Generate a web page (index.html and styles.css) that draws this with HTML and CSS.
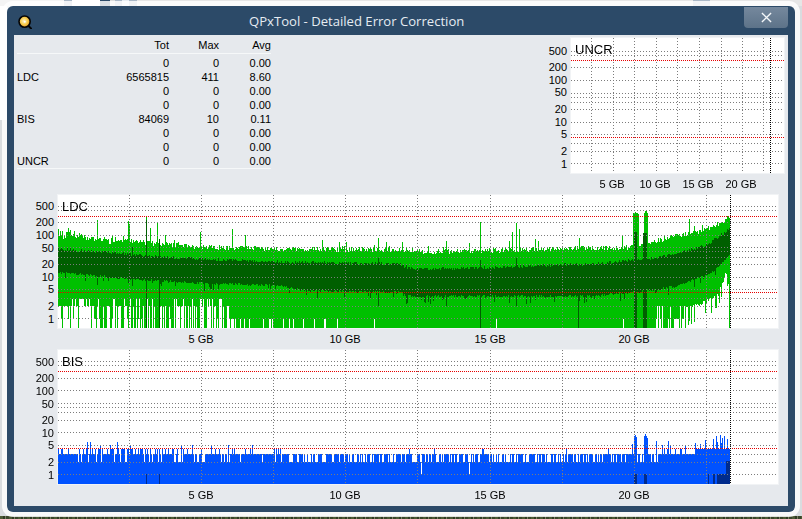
FILE: index.html
```html
<!DOCTYPE html>
<html lang="en">
<head>
<meta charset="utf-8">
<title>QPxTool - Detailed Error Correction</title>
<link rel="stylesheet" href="styles.css">
</head>
<body>
<main class="window">
  <header class="titlebar">
    <svg class="app-icon" viewBox="0 0 14 14" aria-hidden="true">
      <defs>
        <radialGradient id="disc" cx="45%" cy="45%" r="60%">
          <stop offset="0" stop-color="#fff6c8"/>
          <stop offset="0.55" stop-color="#f6c948"/>
          <stop offset="1" stop-color="#e08a1c"/>
        </radialGradient>
      </defs>
      <path d="M10 10.5 L13 13.4" stroke="#050505" stroke-width="2" stroke-linecap="round"/>
      <circle cx="6.6" cy="6.6" r="5.6" fill="url(#disc)" stroke="#050505" stroke-width="1.6"/>
      <circle cx="6.8" cy="6.8" r="1" fill="#fff"/>
    </svg>
    <h1 class="title">QPxTool - Detailed Error Correction</h1>
    <button class="close" type="button" aria-label="Close">
      <svg viewBox="0 0 12 12" aria-hidden="true"><path d="M1 1 L11 11 M11 1 L1 11"/></svg>
    </button>
  </header>
  <div class="panel">
    <div class="top-row">
      <table class="stats">
        <thead>
          <tr><th></th><th>Tot</th><th>Max</th><th>Avg</th></tr>
        </thead>
        <tbody>
          <tr><td></td><td>0</td><td>0</td><td>0.00</td></tr>
          <tr><td>LDC</td><td>6565815</td><td>411</td><td>8.60</td></tr>
          <tr><td></td><td>0</td><td>0</td><td>0.00</td></tr>
          <tr><td></td><td>0</td><td>0</td><td>0.00</td></tr>
          <tr><td>BIS</td><td>84069</td><td>10</td><td>0.11</td></tr>
          <tr><td></td><td>0</td><td>0</td><td>0.00</td></tr>
          <tr><td></td><td>0</td><td>0</td><td>0.00</td></tr>
          <tr><td>UNCR</td><td>0</td><td>0</td><td>0.00</td></tr>
        </tbody>
      </table>

      <section class="chart chart-uncr">
        <div class="y-axis">
          <span style="top:13px">500</span><span style="top:29px">200</span><span style="top:42px">100</span><span style="top:54px">50</span><span style="top:71px">20</span><span style="top:84px">10</span><span style="top:96px">5</span><span style="top:113px">2</span><span style="top:126px">1</span>
        </div>
        <div class="plot">
          <canvas id="uncr" width="213" height="135"></canvas>
          <span class="plot-name">UNCR</span>
        </div>
        <div class="x-axis">
          <span style="left:41px">5 GB</span><span style="left:84px">10 GB</span><span style="left:127px">15 GB</span><span style="left:170px">20 GB</span>
        </div>
      </section>
    </div>

    <section class="chart chart-wide">
      <div class="y-axis">
        <span style="top:11px">500</span><span style="top:27px">200</span><span style="top:40px">100</span><span style="top:53px">50</span><span style="top:69px">20</span><span style="top:82px">10</span><span style="top:94px">5</span><span style="top:111px">2</span><span style="top:124px">1</span>
      </div>
      <div class="plot">
        <canvas id="ldc" width="720" height="133"></canvas>
        <span class="plot-name">LDC</span>
      </div>
      <div class="x-axis">
        <span style="left:143px">5 GB</span><span style="left:287px">10 GB</span><span style="left:432px">15 GB</span><span style="left:576px">20 GB</span>
      </div>
    </section>

    <section class="chart chart-wide chart-bis">
      <div class="y-axis">
        <span style="top:12px">500</span><span style="top:28px">200</span><span style="top:41px">100</span><span style="top:54px">50</span><span style="top:70px">20</span><span style="top:83px">10</span><span style="top:95px">5</span><span style="top:112px">2</span><span style="top:125px">1</span>
      </div>
      <div class="plot">
        <canvas id="bis" width="720" height="134"></canvas>
        <span class="plot-name">BIS</span>
      </div>
      <div class="x-axis">
        <span style="left:143px">5 GB</span><span style="left:287px">10 GB</span><span style="left:432px">15 GB</span><span style="left:576px">20 GB</span>
      </div>
    </section>
  </div>
</main>
<script src="script.js"></script>
</body>
</html>
```

FILE: styles.css
```css
* { box-sizing: border-box; }

html, body { margin: 0; height: 100%; }

body {
  width: 802px;
  height: 519px;
  overflow: hidden;
  padding: 6px 0 0 7px;
  font-family: "Liberation Sans", Arial, sans-serif;
  background-color: #d9dcdf;
  background-image:
    linear-gradient(90deg, #f4f4f4 0 64px, #a9b7c6 64px 72px, #fff 72px 100px, #2c4a68 100px 110px, #dcdcdc 110px 115px, #a9b7c6 115px 122px, #e8edf2 122px 129px, #a9b7c6 129px 137px, #e6e6e6 137px 693px, #a9b7c6 693px 710px, #e6e6e6 710px),
    linear-gradient(#fff, #fff),
    repeating-linear-gradient(90deg, #4c5a34 0 3px, #2f3a24 3px 5px, #7a8060 5px 6px, #39452a 6px 9px);
  background-size: 100% 6px, 7px 120px, 100% 3px;
  background-position: 0 0, 0 0, 0 bottom;
  background-repeat: no-repeat;
}

.window {
  width: 788px;
  height: 506px;
  display: flex;
  flex-direction: column;
  background: #2c4a68;
  border-radius: 6px;
  box-shadow: 0 0 0 5px rgba(255, 255, 255, 0.82);
}

.titlebar {
  flex: 0 0 29px;
  display: flex;
  align-items: flex-start;
  padding: 1px 7px 0 11px;
}

.app-icon {
  flex: none;
  width: 14px;
  height: 14px;
  margin-top: 8px;
}

.title {
  margin: 5px 0 0 217px;
  flex: 1;
  font: 400 13.1px/18px "Open Sans", sans-serif;
  color: #e6ecf2;
  white-space: nowrap;
}

.close {
  flex: none;
  width: 44px;
  height: 21px;
  padding: 0;
  border: 0;
  border-radius: 0 0 4px 4px;
  background: linear-gradient(#75889d, #5d7389);
  display: flex;
  align-items: center;
  justify-content: center;
}

.close svg { width: 11px; height: 11px; }
.close path { stroke: #f4f7fa; stroke-width: 1.5; fill: none; }

.panel {
  flex: 1;
  margin: 0 7px 7px;
  padding-top: 3px;
  background: #e6e9ed;
}

.top-row {
  display: flex;
  justify-content: space-between;
  align-items: flex-start;
}

.stats {
  margin-left: 3px;
  width: 254px;
  table-layout: fixed;
  border-collapse: collapse;
  font-size: 11px;
  color: #000;
}

.stats th, .stats td {
  padding: 0;
  height: 14px;
  line-height: 14px;
  font-weight: 400;
  text-align: right;
}

.stats th:nth-child(1) { width: 102px; }
.stats th:nth-child(2) { width: 50px; }
.stats th:nth-child(3) { width: 50px; }
.stats th:nth-child(4) { width: 52px; }

.stats td:first-child { text-align: left; }

.stats thead tr { height: 15px; border-bottom: 1px solid #f6f8f9; }
.stats thead th { vertical-align: top; }

.stats tbody tr:first-child td { height: 17px; vertical-align: bottom; }
.stats tbody tr:last-child { border-bottom: 1px solid #f6f8f9; }

.chart {
  display: grid;
  grid-template-columns: 44px auto;
  grid-template-rows: auto 22px;
  font-size: 11px;
  color: #000;
}

.chart-uncr { margin-right: 4px; }
.chart-wide { margin-right: 10px; }

.y-axis {
  position: relative;
}

.y-axis span {
  position: absolute;
  right: 4px;
  line-height: 12px;
  transform: translateY(-50%);
}

.plot {
  position: relative;
  line-height: 0;
  background: #fff;
  box-shadow: 0 0 0 1px #f1f3f5;
}

.plot-name {
  position: absolute;
  left: 4px;
  top: 4px;
  font-size: 13px;
  line-height: 16px;
  color: #000;
}

.x-axis {
  grid-column: 2;
  position: relative;
}

.x-axis span {
  position: absolute;
  top: 5px;
  line-height: 12px;
  white-space: nowrap;
  transform: translateX(-50%);
}
```

FILE: script.js
```js
(function () {
  var seed = 20240611;
  function rnd() {
    seed = (seed + 0x6D2B79F5) | 0;
    var t = Math.imul(seed ^ (seed >>> 15), 1 | seed);
    t = (t + Math.imul(t ^ (t >>> 7), 61 | t)) ^ t;
    return ((t ^ (t >>> 14)) >>> 0) / 4294967296;
  }
  function interp(pts, x) {
    for (var i = 1; i < pts.length; i++) {
      if (x <= pts[i][0]) {
        var a = pts[i - 1], b = pts[i];
        return a[1] + (b[1] - a[1]) * (x - a[0]) / (b[0] - a[0]);
      }
    }
    return pts[pts.length - 1][1];
  }

  var LEVELS = [1, 2, 3, 5, 10, 20, 30, 40, 50, 100, 200, 400, 500];

  function drawGrid(ctx, o) {
    var w = ctx.canvas.width, h = ctx.canvas.height, i, k;
    ctx.fillStyle = "#7c7c7c";
    LEVELS.forEach(function (v) {
      var y = Math.round(o.y1 - o.dec * Math.log10(v));
      for (k = 0; k < w; k += 3) ctx.fillRect(k, y, 1, 1);
    });
    o.vert.forEach(function (x) {
      for (k = 0; k < h; k += 3) ctx.fillRect(x - o.left, k, 1, 1);
    });
    ctx.fillStyle = "#e60000";
    o.red.forEach(function (y) {
      for (k = 0; k < w; k += 2) ctx.fillRect(k, y, 1, 1);
    });
    ctx.fillStyle = "#000";
    for (i = 0; i < h; i += 2) ctx.fillRect(o.end - o.left, i, 1, 1);
  }

  var wideVert = [129, 201, 273, 345, 417, 490, 562, 634, 706];

  function ldc() {
    var ctx = document.getElementById("ldc").getContext("2d");
    var L = 58, T = 195;
    var top = [[58,233],[100,238],[130,240],[160,243],[200,246],[280,248],[400,249],[430,251],[470,250],[590,247],[623,247],[657,240],[677,235],[697,232],[707,228],[718,223],[730,215]];
    var dTop = [[58,249],[100,252],[130,254],[145,256],[200,259],[280,262],[400,264],[405,268],[430,269],[470,268],[590,264],[657,258],[677,253],[697,248],[707,245],[718,237],[730,228]];
    var dBot = [[58,272],[100,276],[130,279],[170,281],[200,283],[280,285],[300,290],[400,292],[405,296],[590,296],[660,289],[677,285],[697,278],[707,275],[718,267],[730,253]];
    var spikes = {97:220,128:221,129:224,146:217,157:222,150:228,165:235,200:232,232:229,245:235,378:238,402:242,446:241,480:222,512:232,516:223,519:229,535:239,579:238,622:236,664:236,689:219,660:238};
    var darkLines = [[146,220,328],[159,239,328],[132,247,286],[97,272,285],[378,258,306],[406,264,304],[480,260,328],[446,285,306],[578,290,328],[526,290,304],[516,258,306]];
    function light(x, a, b) { ctx.fillStyle = "#00c000"; ctx.fillRect(x - L, a - T, 1, b - a); }
    function dark(x, a, b) { ctx.fillStyle = "#005f00"; ctx.fillRect(x - L, a - T, 1, b - a); }
    for (var x = 58; x < 730; x++) {
      var r = rnd();
      var yt = interp(top, x) + rnd() * 5 - 1.5;
      if (x < 130) yt += rnd() * 6 - 3;
      if (r < 0.04) yt -= rnd() * 9;
      if (spikes[x]) yt = spikes[x];
      if ((x >= 633 && x <= 638)) yt = 212 + rnd() * 3;
      if ((x >= 644 && x <= 647)) yt = 210 + rnd() * 3;
      if (x > 700 && rnd() < 0.05) yt -= 6;

      var yb, q = rnd(), s = rnd();
      if (x < 232) {
        var pFull = x < 100 ? 0.14 : x < 150 ? 0.32 : 0.5;
        yb = q < pFull ? 328 : (s < 0.12 ? 319 : s < 0.58 ? 306 : 299);
      } else if (x < 392) {
        yb = q < 0.9 ? 328 : 319;
      } else if (x < 656) {
        yb = q < 0.01 ? 319 : 328;
      } else if (x < 686) {
        yb = q < 0.5 ? 328 : (s < 0.5 ? 319 : 306);
      } else if (x < 729) {
        var e = interp([[686,306],[700,302],[707,299],[718,292],[729,262]], x);
        yb = q < 0.2 ? e + 12 + rnd() * 8 : e + rnd() * 4;
      } else {
        yb = 328;
      }
      yt = Math.round(yt); yb = Math.round(yb);
      light(x, yt, yb);

      var dt = Math.round(interp(dTop, x) + rnd() * 3 - 1.5);
      var db = interp(dBot, x) + rnd() * 2.5 - 1;
      if (rnd() < 0.1) db += rnd() * 7;
      if (x >= 634 && x <= 636) { dt = 232; db = 328; }
      if (x >= 643 && x <= 646) { dt = 233; db = 328; }
      dark(x, dt, Math.round(db));
    }
    darkLines.forEach(function (d) { dark(d[0], d[1], d[2]); });
    drawGrid(ctx, { y1: 318.3 - T, dec: 41.7, vert: wideVert, end: 730, left: L, red: [21, 97] });
  }

  function bis() {
    var ctx = document.getElementById("bis").getContext("2d");
    var L = 58, T = 350, B = 484;
    var lvl = { 2: 462, 3: 454, 4: 449, 5: 445, 6: 442 };
    var spikes = { 634: 436, 635: 435, 636: 437, 644: 436, 645: 434, 646: 436, 647: 438, 656: 441, 668: 441, 632: 444, 695: 443, 705: 440, 713: 439, 716: 436, 720: 435, 722: 438, 724: 436, 727: 439 };
    function col(x, a, b, c) { ctx.fillStyle = c; ctx.fillRect(x - L, a - T, 1, b - a); }
    var blue = "#0052ff", navy = "#002b8c";
    for (var x = 58; x < 730; x++) {
      var q = rnd(), y;
      if (x < 170) {
        y = q < 0.015 ? lvl[6] : q < 0.05 ? lvl[5] : q < 0.36 ? lvl[4] : q < 0.48 ? lvl[2] : lvl[3];
      } else if (x < 282) {
        y = q < 0.01 ? lvl[5] : q < 0.14 ? lvl[4] : q < 0.34 ? lvl[2] : lvl[3];
      } else if (x < 630) {
        y = q < 0.02 ? lvl[4] : q < 0.42 ? lvl[2] : lvl[3];
      } else if (x < 660) {
        y = q < 0.08 ? lvl[5] : q < 0.4 ? lvl[2] : lvl[3];
      } else if (x < 695) {
        y = q < 0.1 ? lvl[5] : q < 0.25 ? lvl[4] : lvl[3];
      } else {
        y = q < 0.3 ? lvl[5] - 4 * rnd() : lvl[4];
      }
      if (spikes[x]) y = spikes[x];
      col(x, Math.round(y), B, blue);
    }
    col(146, 474, B, navy); col(159, 474, B, navy);
    col(421, 462, 474, "#fff"); col(469, 462, 474, "#fff");
    [[634, 636, 474], [644, 646, 474], [708, 708, 474], [713, 714, 474], [717, 725, 474], [726, 729, 461]].forEach(function (r) {
      for (var i = r[0]; i <= r[1]; i++) col(i, r[2], B, navy);
    });
    drawGrid(ctx, { y1: 474.3 - T, dec: 42, vert: wideVert, end: 730, left: L, red: [21, 98] });
  }

  function uncr() {
    var ctx = document.getElementById("uncr").getContext("2d");
    drawGrid(ctx, { y1: 163.3 - 38, dec: 41.67, vert: [591, 613, 634, 656, 677, 699, 721, 742, 763], end: 770, left: 571, red: [22, 99] });
  }

  ldc();
  bis();
  uncr();
})();
```
